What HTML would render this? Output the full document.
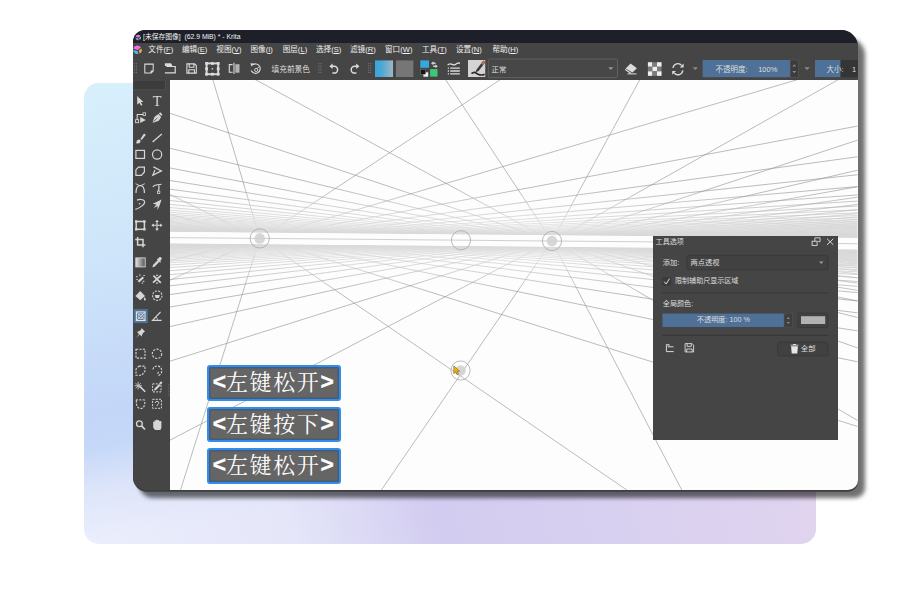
<!DOCTYPE html><html lang="zh"><head><meta charset="utf-8"><title>Krita</title><style>
html,body{margin:0;padding:0;background:#fff;}
body{width:900px;height:600px;position:relative;overflow:hidden;font-family:"Liberation Sans","Noto Sans CJK SC",sans-serif;}
.abs{position:absolute}
#card{position:absolute;left:84px;top:83px;width:732px;height:460.5px;border-radius:15px;
 background:linear-gradient(75deg,#ebeefc 0%,#e5e7f9 24%,#d2ccf0 42%,#d8d0f0 62%,#e0d4ef 86%);overflow:hidden}
#card .ov{position:absolute;left:0;top:0;width:100%;height:100%;
 background:linear-gradient(170deg,#d8effc 0%,#cfe6fa 28%,#c3d6f8 56%,#c5d8f8 62%,rgba(214,224,249,0.55) 70%,rgba(230,233,251,0) 78%)}
#win{position:absolute;left:133px;top:30px;width:724.5px;height:459.5px;border-radius:12px 17px 10px 14px;
 background:#454545;box-shadow:0 1.8px 0.6px #3e3e3e,6.5px 8px 4px rgba(0,0,0,.56);overflow:hidden}
#title{position:absolute;left:0;top:0;width:100%;height:12.5px;background:#1d2029;color:#f4f4f4;font-size:6.8px;line-height:14.4px;white-space:nowrap}
#menu{position:absolute;left:0;top:12.5px;width:100%;height:14.5px;background:#454545;color:#f0f0f0;font-size:7.6px;line-height:14px;white-space:nowrap}
#menu span{position:absolute;top:0}
#menu u{text-decoration-thickness:0.6px;text-underline-offset:1px}
#tb{position:absolute;left:0;top:27px;width:100%;height:22.5px;background:#454545}
#canvas{position:absolute;left:37px;top:49.5px;width:687.5px;height:410px;background:#fdfdfd;overflow:hidden}
#tools{position:absolute;left:0;top:49.5px;width:37px;height:410px;background:#454545}
.key{position:absolute;left:37.2px;width:134px;height:35.5px;box-sizing:border-box;border:2.5px solid #2f8ff0;border-radius:3px;background:#656565;
 box-shadow:inset 0 0 0 1.5px #4a5a70;color:#fff;text-align:center;font-family:"Liberation Serif","Noto Serif CJK SC",serif;font-size:22px;letter-spacing:1.6px;line-height:30px;padding-right:2px;white-space:nowrap}
.key b{font-family:"Liberation Sans",sans-serif;font-weight:bold;font-size:22.7px;letter-spacing:0;-webkit-text-stroke:0.45px #fff;position:relative;top:-1.2px}
.t{color:#dedede;line-height:10px;white-space:nowrap}
#panel{position:absolute;left:653.3px;top:236px;width:184.5px;height:203.5px;background:#454545;color:#e8e8e8;font-size:7.6px;white-space:nowrap}
</style></head><body>
<div id="card"><div class="ov"></div></div>
<div id="win">
<div id="title"><span class="abs" style="left:10px">[未保存图像]&nbsp; (62.9 MiB) * - Krita</span></div>
<div id="menu"><span style="left:15.3px">文件(<u>F</u>)</span><span style="left:49.0px">编辑(<u>E</u>)</span><span style="left:83.3px">视图(<u>V</u>)</span><span style="left:117.5px">图像(<u>I</u>)</span><span style="left:149.7px">图层(<u>L</u>)</span><span style="left:183.0px">选择(<u>S</u>)</span><span style="left:217.0px">滤镜(<u>R</u>)</span><span style="left:252.0px">窗口(<u>W</u>)</span><span style="left:289.0px">工具(<u>T</u>)</span><span style="left:323.0px">设置(<u>N</u>)</span><span style="left:359.5px">帮助(<u>H</u>)</span></div>
<svg class="abs" style="left:0;top:0" width="12" height="27" viewBox="133 30 12 27"><g transform="translate(138.2 37.5) scale(0.66)"><path d="M-4.2 -1.2A4.4 4.4 0 0 1 3.6 -2.4L0.4 0.2Z" fill="#f06fe0"/><path d="M-4.3 0.2L0.2 1.2L1 4.2A4.4 4.4 0 0 1 -4.3 0.2Z" fill="#4fb2f2"/><path d="M1.4 0.6L4.2 -1.4A4.4 4.4 0 0 1 2.2 3.8Z" fill="#e3b23c"/></g><g transform="translate(137.4 49.8)"><path d="M-4.2 -1.2A4.4 4.4 0 0 1 3.6 -2.4L0.4 0.2Z" fill="#f06fe0"/><path d="M-4.3 0.2L0.2 1.2L1 4.2A4.4 4.4 0 0 1 -4.3 0.2Z" fill="#4fb2f2"/><path d="M1.4 0.6L4.2 -1.4A4.4 4.4 0 0 1 2.2 3.8Z" fill="#e3b23c"/></g></svg>
<div id="tb"><svg class="abs" style="left:0;top:0" width="724.5" height="22.5" viewBox="133 57 724.5 22.5"><rect x="133.9" y="63.2" width="1" height="1" fill="#7a7a7a"/><rect x="135.9" y="63.2" width="1" height="1" fill="#7a7a7a"/><rect x="133.9" y="65.4" width="1" height="1" fill="#7a7a7a"/><rect x="135.9" y="65.4" width="1" height="1" fill="#7a7a7a"/><rect x="133.9" y="67.6" width="1" height="1" fill="#7a7a7a"/><rect x="135.9" y="67.6" width="1" height="1" fill="#7a7a7a"/><rect x="133.9" y="69.8" width="1" height="1" fill="#7a7a7a"/><rect x="135.9" y="69.8" width="1" height="1" fill="#7a7a7a"/><rect x="133.9" y="72.0" width="1" height="1" fill="#7a7a7a"/><rect x="135.9" y="72.0" width="1" height="1" fill="#7a7a7a"/><path d="M144.8 64.1H153.2V71L151.2 73H144.8Z M153.2 71H151.2V73" fill="none" stroke="#dcdcdc" stroke-width="1.05"/><path d="M164.9 63.2h6l1.2 1.7v1.2h-7.2z" fill="#dcdcdc"/><path d="M166.4 66.5H175.2V72.9H164.9" fill="none" stroke="#dcdcdc" stroke-width="1.2"/><path d="M186.9 63.9H194.6L196.3 65.6V73.1H186.9Z M189.2 63.9V67.2H193.9V63.9 M188.8 73.1V69.7H194.4V73.1" fill="none" stroke="#dcdcdc" stroke-width="1.1"/><rect x="206.6" y="63.4" width="11.6" height="10.8" fill="none" stroke="#dcdcdc" stroke-width="1.9"/><rect x="205.2" y="62.0" width="2.8" height="2.8" fill="#dcdcdc"/><rect x="205.2" y="67.4" width="2.8" height="2.8" fill="#dcdcdc"/><rect x="205.2" y="72.8" width="2.8" height="2.8" fill="#dcdcdc"/><rect x="211.0" y="62.0" width="2.8" height="2.8" fill="#dcdcdc"/><rect x="211.7" y="68.1" width="1.4" height="1.4" fill="#dcdcdc"/><rect x="211.0" y="72.8" width="2.8" height="2.8" fill="#dcdcdc"/><rect x="216.8" y="62.0" width="2.8" height="2.8" fill="#dcdcdc"/><rect x="216.8" y="67.4" width="2.8" height="2.8" fill="#dcdcdc"/><rect x="216.8" y="72.8" width="2.8" height="2.8" fill="#dcdcdc"/><path d="M234 62.8V74" stroke="#dcdcdc" stroke-width="1.1"/><path d="M232.6 64.6H229.3V72.3H232.6" fill="none" stroke="#dcdcdc" stroke-width="1.1"/><rect x="235.3" y="64.2" width="4.2" height="8.5" fill="#b4b4b4"/><path d="M252.6 64.9A4.7 4.7 0 1 1 251.2 70.6" fill="none" stroke="#dcdcdc" stroke-width="1.1"/><path d="M250.3 63.2l3.6 0.3l-2.3 2.9z" fill="#dcdcdc"/><circle cx="256.2" cy="70" r="1.6" fill="none" stroke="#dcdcdc" stroke-width="0.9"/><path d="M257.2 68.8L259 66.6" stroke="#dcdcdc" stroke-width="0.9"/><rect x="318.4" y="63.2" width="1" height="1" fill="#7a7a7a"/><rect x="320.4" y="63.2" width="1" height="1" fill="#7a7a7a"/><rect x="318.4" y="65.4" width="1" height="1" fill="#7a7a7a"/><rect x="320.4" y="65.4" width="1" height="1" fill="#7a7a7a"/><rect x="318.4" y="67.6" width="1" height="1" fill="#7a7a7a"/><rect x="320.4" y="67.6" width="1" height="1" fill="#7a7a7a"/><rect x="318.4" y="69.8" width="1" height="1" fill="#7a7a7a"/><rect x="320.4" y="69.8" width="1" height="1" fill="#7a7a7a"/><rect x="318.4" y="72.0" width="1" height="1" fill="#7a7a7a"/><rect x="320.4" y="72.0" width="1" height="1" fill="#7a7a7a"/><path d="M331.2 66.3H334.2A3.4 3.4 0 0 1 334.2 73.1H332.4" fill="none" stroke="#dcdcdc" stroke-width="1.5"/><path d="M329.4 66.3L332.6 63.6V69z" fill="#dcdcdc"/><path d="M357.6 66.3H354.6A3.4 3.4 0 0 0 354.6 73.1H356.4" fill="none" stroke="#dcdcdc" stroke-width="1.5"/><path d="M359.4 66.3L356.2 63.6V69z" fill="#dcdcdc"/><rect x="368.2" y="63.2" width="1" height="1" fill="#7a7a7a"/><rect x="370.2" y="63.2" width="1" height="1" fill="#7a7a7a"/><rect x="368.2" y="65.4" width="1" height="1" fill="#7a7a7a"/><rect x="370.2" y="65.4" width="1" height="1" fill="#7a7a7a"/><rect x="368.2" y="67.6" width="1" height="1" fill="#7a7a7a"/><rect x="370.2" y="67.6" width="1" height="1" fill="#7a7a7a"/><rect x="368.2" y="69.8" width="1" height="1" fill="#7a7a7a"/><rect x="370.2" y="69.8" width="1" height="1" fill="#7a7a7a"/><rect x="368.2" y="72.0" width="1" height="1" fill="#7a7a7a"/><rect x="370.2" y="72.0" width="1" height="1" fill="#7a7a7a"/><defs><linearGradient id="bg1" x1="0" x2="1" y1="0" y2="0"><stop offset="0" stop-color="#35a6dc"/><stop offset="0.35" stop-color="#4aa8d6"/><stop offset="1" stop-color="#9fb7c2"/></linearGradient></defs><rect x="375" y="60.4" width="18" height="16.6" fill="url(#bg1)"/><rect x="396" y="60.4" width="17.4" height="16.6" fill="#767676"/><rect x="423.4" y="72.3" width="4.8" height="4.4" fill="#f2f2f2"/><rect x="420.6" y="69.6" width="5" height="4.6" fill="#16181c" stroke="#888" stroke-width="0.4"/><rect x="420.3" y="60.4" width="8.7" height="7.4" fill="#36a9dc"/><rect x="430.1" y="69.1" width="7.4" height="7.5" fill="#3cc878"/><path d="M431 63.2l2.4-2v1.3h2.2v1.4h-2.2v1.3z M437.8 66.2l-2.4 2v-1.3h-2.2v-1.4h2.2v-1.3z" fill="#cfcfcf"/><path d="M447.6 65.2C450.5 61.6 453 66.4 455.4 64.4S458.6 62.6 460 63.4" fill="none" stroke="#dcdcdc" stroke-width="1.3"/><path d="M450.2 68.2H459.8M450.2 71H459.8M450.2 73.9H459.8" stroke="#dcdcdc" stroke-width="1.3"/><path d="M447.8 68.2h1.2M447.8 71h1.2M447.8 73.9h1.2" stroke="#dcdcdc" stroke-width="1.3"/><rect x="468" y="60" width="17.2" height="17" fill="#d4d4d4"/><path d="M483.4 60.4L476.6 69.4L475.4 72.6L478.6 71L485.4 62.2Z" fill="#3a3a3a"/><path d="M483.4 60.4L481 63.6L483 65.2L485.4 62.2Z" fill="#b07050"/><path d="M471.5 73.6C474 71.2 475.5 72.4 476.6 73.4S481.5 76 484.6 74.2" fill="none" stroke="#2a2a2a" stroke-width="1.7"/><rect x="488.3" y="59" width="129.2" height="18.6" rx="1.5" fill="#474747" stroke="#686868" stroke-width="0.8"/><path d="M608.3 67.2h5l-2.5 2.8z" fill="#9a9a9a"/><path d="M630.6 63.6L636.9 68.2L632.4 72.4L625.6 68.4Z" fill="#dcdcdc"/><path d="M625.2 69.6L631.2 73.4" stroke="#dcdcdc" stroke-width="1.2"/><path d="M627.5 73.9H636.5" stroke="#dcdcdc" stroke-width="1"/><rect x="647.90" y="62.20" width="4.55" height="4.55" fill="#efefef"/><rect x="647.90" y="66.75" width="4.55" height="4.55" fill="#7c7c7c"/><rect x="647.90" y="71.30" width="4.55" height="4.55" fill="#efefef"/><rect x="652.45" y="62.20" width="4.55" height="4.55" fill="#7c7c7c"/><rect x="652.45" y="66.75" width="4.55" height="4.55" fill="#efefef"/><rect x="652.45" y="71.30" width="4.55" height="4.55" fill="#7c7c7c"/><rect x="657.00" y="62.20" width="4.55" height="4.55" fill="#efefef"/><rect x="657.00" y="66.75" width="4.55" height="4.55" fill="#7c7c7c"/><rect x="657.00" y="71.30" width="4.55" height="4.55" fill="#efefef"/><path d="M673 68A4.9 4.9 0 0 1 681.6 65.4" fill="none" stroke="#dcdcdc" stroke-width="1.3"/><path d="M683.6 63.6V67.4H679.8z" fill="#dcdcdc"/><path d="M682.8 70.4A4.9 4.9 0 0 1 674.2 73" fill="none" stroke="#dcdcdc" stroke-width="1.3"/><path d="M672.2 74.8V71H676z" fill="#dcdcdc"/><path d="M692.6 67.2h5.4l-2.7 2.9z" fill="#8c8c8c"/><rect x="702.6" y="60" width="87.6" height="17.2" fill="#4f7197"/><rect x="790.2" y="60" width="8.2" height="17.2" fill="#3c3c3c" stroke="#5a5a5a" stroke-width="0.6"/><path d="M792.4 66.4l1.9-2.2l1.9 2.2z M792.4 71l1.9 2.2l1.9-2.2z" fill="#8a8a8a"/><path d="M804.4 67.2h5.4l-2.7 2.9z" fill="#8c8c8c"/><rect x="815" y="60" width="43" height="17.2" fill="#353535"/><rect x="815" y="60" width="25.4" height="17.2" fill="#4f7197"/></svg><span class="abs t" style="left:138.5px;top:7.6px;font-size:7.7px">填充前景色</span><span class="abs t" style="left:358.5px;top:7.6px;font-size:7.4px">正常</span><span class="abs t" style="left:582.5px;top:7.6px;font-size:7.5px">不透明度:</span><span class="abs t" style="left:625.2px;top:7.6px;font-size:7.5px">100%</span><span class="abs t" style="left:693.6px;top:7.6px;font-size:7.5px">大小:</span><span class="abs t" style="left:719px;top:7.6px;font-size:7.5px">1</span></div>
<div id="tools"><svg class="abs" style="left:0;top:0" width="37" height="410" viewBox="133 79.5 37 410"><rect x="133" y="79.5" width="32.6" height="9.8" fill="#3c3c3c" stroke="#565656" stroke-width="0.7"/><path d="M137.2 95.6V104.2L139.4 102.2L141 105.2L142.4 104.5L140.9 101.6L143.4 101.4Z" fill="#d6d6d6"/><text x="157" y="105" font-family="'Liberation Serif',serif" font-size="14.2" fill="#d6d6d6" text-anchor="middle">T</text><path d="M137.2 119.4V114H143.4" fill="none" stroke="#d6d6d6" stroke-width="1.1" /><rect x="135.6" y="119.2" width="3" height="3" fill="none" stroke="#d6d6d6" stroke-width="0.9"/><rect x="143" y="112.3" width="2.6" height="2.6" fill="none" stroke="#d6d6d6" stroke-width="0.8"/><path d="M140.2 116.6L145.8 119.6L140.2 122.4Z" fill="#d6d6d6"/><path d="M152.6 121.8L154.6 116.2L158.4 113.6L161.2 116.4L158.8 120.2L153 122.2Z" fill="#d6d6d6"/><path d="M153.4 121.2L157.4 117.4" stroke="#454545" stroke-width="0.8"/><path d="M158.8 113L160.2 111.8L162.4 114L161.4 115.6Z" fill="#d6d6d6"/><path d="M136.2 142.4C136.4 139.6 138.4 138.6 139.8 139.2C141.4 140.2 140.6 142.4 138.2 143C137.4 143.2 136.6 143 136.2 142.4Z" fill="#d6d6d6"/><path d="M140.4 138.4L143.6 133.6C144.4 132.6 146 133.6 145.4 134.8L141.8 139.6Z" fill="#d6d6d6"/><path d="M152.6 141.6L161.8 133.6" fill="none" stroke="#d6d6d6" stroke-width="1.3" /><rect x="135.9" y="149.9" width="8.6" height="8" fill="none" stroke="#d6d6d6" stroke-width="1.2"/><circle cx="157.1" cy="154" r="4.6" fill="none" stroke="#d6d6d6" stroke-width="1.2"/><path d="M138.4 166.6H144.4V171.4L141.4 174.8H135.9V169.4Z" fill="none" stroke="#d6d6d6" stroke-width="1.2" /><path d="M153.4 166.4L161.4 170.4L152.8 174.8L155 169.4" fill="none" stroke="#d6d6d6" stroke-width="1.2" /><path d="M136 192.6C136 187 138.4 185 140.2 185S144.4 187 144.4 192.6" fill="none" stroke="#d6d6d6" stroke-width="1.2" /><path d="M135.6 183.2L140.2 185.4L144.8 183.2" fill="none" stroke="#d6d6d6" stroke-width="0.9" /><path d="M152.8 186.4C155 183.6 159 184.2 161.4 183.8M158.6 184.4C159.6 187 158.6 188.4 158.6 190.6" fill="none" stroke="#d6d6d6" stroke-width="1.2" /><rect x="157.4" y="190.6" width="2.4" height="2.4" fill="none" stroke="#d6d6d6" stroke-width="0.8"/><path d="M135.4 208.8C140 207.6 145.6 203.6 144.4 200.6C143.4 198.4 139 198.8 137 199.6" fill="none" stroke="#d6d6d6" stroke-width="1.2" /><circle cx="139.6" cy="203.2" r="0.8" fill="#d6d6d6"/><path d="M161.6 199L152.8 203.2L156.4 204L153.6 207.4L157.6 205.4L157.4 209.4L159.4 205.6Z" fill="#d6d6d6"/><rect x="136.2" y="221" width="8.2" height="7.8" fill="none" stroke="#d6d6d6" stroke-width="1.5"/><rect x="135.0" y="219.8" width="2.4" height="2.4" fill="#d6d6d6"/><rect x="135.0" y="227.6" width="2.4" height="2.4" fill="#d6d6d6"/><rect x="143.2" y="219.8" width="2.4" height="2.4" fill="#d6d6d6"/><rect x="143.2" y="227.6" width="2.4" height="2.4" fill="#d6d6d6"/><path d="M157 220.4V229.2M152.4 224.8H161.6" fill="none" stroke="#d6d6d6" stroke-width="1.1" /><path d="M157 219.2L158.8 221.6H155.2ZM157 230.4L158.8 228H155.2ZM151.4 224.8L153.8 223V226.6ZM162.6 224.8L160.2 223V226.6Z" fill="#d6d6d6"/><path d="M137.6 236.6V244.4H145.4M135.2 239H143V246.8" fill="none" stroke="#d6d6d6" stroke-width="1.5" /><defs><linearGradient id="tg" x1="0" x2="1" y1="0" y2="0"><stop offset="0" stop-color="#e0e0e0"/><stop offset="1" stop-color="#555"/></linearGradient></defs><rect x="135.8" y="257.4" width="9.4" height="9" fill="url(#tg)" stroke="#d6d6d6" stroke-width="0.9"/><path d="M152.4 266.8L153 264.4L157.8 259.6L159.4 261.2L154.6 266.2Z" fill="#d6d6d6"/><path d="M157.6 258.6L159.4 256.8C160.4 255.8 162.6 257.6 161.6 258.8L160.2 260.6L161 261.4L160.2 262.2L156.8 258.8L157.6 258Z" fill="#d6d6d6"/><path d="M137.6 280.4L142.6 276L144 277.4L139.2 282Z" fill="#d6d6d6"/><path d="M136 276.2h1.6M139 274.6h1.6M142.6 280.8h1.8M136.4 279h1.4M141.6 282.6h1.6M143.4 275h1.4" fill="none" stroke="#d6d6d6" stroke-width="1" /><path d="M153 282.2L161 274.8M153.4 275.2L160.8 282.4" fill="none" stroke="#d6d6d6" stroke-width="1.7" /><circle cx="157" cy="274.8" r="0.9" fill="#d6d6d6"/><circle cx="157" cy="282.6" r="0.9" fill="#d6d6d6"/><path d="M135.4 295.4L140.2 290.6L145 295.4L140.2 299.8Z" fill="#d6d6d6"/><path d="M144.6 296.4C145.8 298 146.2 299 145.4 299.8C144.6 300.4 143.6 299.6 144 298.2Z" fill="#d6d6d6"/><circle cx="157.3" cy="295.2" r="4.7" fill="none" stroke="#d6d6d6" stroke-width="1.1" stroke-dasharray="2 1.2"/><path d="M154.8 294.4h5l-0.8 3.2h-3.4z" fill="#d6d6d6"/><rect x="133.6" y="308.6" width="14.2" height="14" fill="#4f7398"/><rect x="136.4" y="311.4" width="8.6" height="8.6" fill="none" stroke="#e4e4e4" stroke-width="1.1"/><path d="M136.4 311.4L145 320M145 311.4L136.4 320" stroke="#e4e4e4" stroke-width="0.9"/><circle cx="140.7" cy="315.7" r="2.6" fill="none" stroke="#e4e4e4" stroke-width="0.8"/><path d="M160.6 311.4L152.6 319.8H161.6" fill="none" stroke="#d6d6d6" stroke-width="1.2" /><path d="M157.4 319.6A3.6 3.6 0 0 0 156 316.4" fill="none" stroke="#d6d6d6" stroke-width="0.8" /><path d="M141.6 327.6L145.2 331.2L144 331.6L142.4 333.6L141.6 336L139.6 334L136.2 337.2L139 333.4L137 331.4L139.4 330.6L141.2 329Z" fill="#d6d6d6"/><rect x="136" y="348.8" width="9" height="8.8" fill="none" stroke="#d6d6d6" stroke-width="1.1" stroke-dasharray="2.2 1.2"/><circle cx="157" cy="353.3" r="4.7" fill="none" stroke="#d6d6d6" stroke-width="1.1" stroke-dasharray="2.2 1.3"/><path d="M139 365.6H145V370.6L141.8 374.8H136V368.6Z" fill="none" stroke="#d6d6d6" stroke-width="1.1" stroke-dasharray="2.2 1.2"/><path d="M153 369C153.4 365 159 364.4 161 367.4C162.6 370.4 161.4 373.6 159.4 374.6C157.6 375 157.4 372 158.8 371.4" fill="none" stroke="#d6d6d6" stroke-width="1.1" stroke-dasharray="2.2 1.2"/><path d="M139.6 385.6L145.2 391.2" fill="none" stroke="#d6d6d6" stroke-width="1.5" /><path d="M138.2 381.4V389M134.6 385.2H141.8M135.6 382.6L140.8 387.8M140.8 382.6L135.6 387.8" fill="none" stroke="#d6d6d6" stroke-width="0.8" /><rect x="152.6" y="383.4" width="8.4" height="8" fill="none" stroke="#d6d6d6" stroke-width="1" stroke-dasharray="2 1.2"/><path d="M154 390L154.6 388L159 383.6L160.4 385L156 389.4Z" fill="#d6d6d6"/><path d="M159.4 382.4L160.6 381.2C161.6 380.6 162.8 381.8 162 382.8L161 384Z" fill="#d6d6d6"/><path d="M136.4 399.8C136 405 137.6 408 140.6 408S145.2 405 144.8 399.8" fill="none" stroke="#d6d6d6" stroke-width="1.1" stroke-dasharray="2.2 1.2"/><path d="M135.8 399.4H145.4" fill="none" stroke="#d6d6d6" stroke-width="1" stroke-dasharray="2.2 1.2"/><rect x="152.6" y="398.8" width="8.8" height="9" fill="none" stroke="#d6d6d6" stroke-width="1" stroke-dasharray="2 1.2"/><path d="M155.2 402.4C155.4 400.4 158.6 400.4 158.8 402.2C158.8 403.8 157 403.8 157 405.6" fill="none" stroke="#d6d6d6" stroke-width="1" /><circle cx="139.4" cy="423.2" r="2.9" fill="none" stroke="#d6d6d6" stroke-width="1.3"/><path d="M141.6 425.4L145 429" fill="none" stroke="#d6d6d6" stroke-width="1.7" /><path d="M153.2 424.2V421.6C153.2 420.9 154.5 420.9 154.5 421.6V420.3C154.5 419.5 156 419.5 156 420.3V419.7C156 418.9 157.6 418.9 157.6 419.7V420.1C157.6 419.4 159.2 419.4 159.2 420.1V421C159.2 420.4 161.4 420.3 161.4 421.2V427.2L160.4 429.6H155L153.2 427Z" fill="#d6d6d6"/><rect x="168.4" y="383.6" width="0.9" height="0.9" fill="#777"/><rect x="168.4" y="385.8" width="0.9" height="0.9" fill="#777"/><rect x="168.4" y="388.0" width="0.9" height="0.9" fill="#777"/><rect x="168.4" y="390.2" width="0.9" height="0.9" fill="#777"/><rect x="168.4" y="392.4" width="0.9" height="0.9" fill="#777"/><rect x="168.4" y="394.6" width="0.9" height="0.9" fill="#777"/></svg></div>
<div id="canvas">
<svg class="abs" style="left:0;top:0" width="687.5" height="410" viewBox="0 0 687.5 410">
<defs><linearGradient id="fade" gradientUnits="userSpaceOnUse" x1="292.20" y1="24.86" x2="289.80" y2="295.52">
<stop offset="0.0000" stop-color="#ffffff" stop-opacity="1.00"/><stop offset="0.3079" stop-color="#ffffff" stop-opacity="1.00"/><stop offset="0.4002" stop-color="#ffffff" stop-opacity="0.55"/><stop offset="0.4520" stop-color="#ffffff" stop-opacity="0.33"/><stop offset="0.4771" stop-color="#ffffff" stop-opacity="0.33"/><stop offset="0.4800" stop-color="#ffffff" stop-opacity="0.00"/><stop offset="0.5000" stop-color="#ffffff" stop-opacity="0.00"/><stop offset="0.5200" stop-color="#ffffff" stop-opacity="0.00"/><stop offset="0.5229" stop-color="#ffffff" stop-opacity="0.33"/><stop offset="0.5480" stop-color="#ffffff" stop-opacity="0.33"/><stop offset="0.5998" stop-color="#ffffff" stop-opacity="0.55"/><stop offset="0.6921" stop-color="#ffffff" stop-opacity="1.00"/><stop offset="1.0000" stop-color="#ffffff" stop-opacity="1.00"/></linearGradient><mask id="fm" maskUnits="userSpaceOnUse" x="0" y="0" width="687.5" height="410"><rect x="0" y="0" width="687.5" height="410" fill="url(#fade)"/></mask></defs>
<g mask="url(#fm)"><path d="M89.8 158.4L-2.0 158.2M89.8 158.4L-2.0 158.2M89.8 158.4L-2.0 158.2M89.8 158.4L-2.0 158.2M89.8 158.4L-2.0 158.2M89.8 158.4L-2.0 158.2M89.8 158.4L-2.0 158.2M89.8 158.4L-2.0 158.2M89.8 158.4L-2.0 158.2M89.8 158.4L-2.0 158.2M89.8 158.4L-2.0 158.2M89.8 158.4L-2.0 158.2M89.8 158.4L-2.0 158.2M89.8 158.4L-2.0 158.3M89.8 158.4L-2.0 158.3M89.8 158.4L-2.0 158.3M89.8 158.4L-2.0 158.3M89.8 158.4L-2.0 158.3M89.8 158.4L-2.0 158.3M89.8 158.4L-2.0 158.3M89.8 158.4L-2.0 158.3M89.8 158.4L-2.0 158.3M89.8 158.4L-2.0 158.3M89.8 158.4L-2.0 158.4M89.8 158.4L-2.0 158.4M89.8 158.4L-2.0 158.4M89.8 158.4L-2.0 158.4M89.8 158.4L-2.0 158.4M89.8 158.4L-2.0 158.4M89.8 158.4L-2.0 158.4M89.8 158.4L-2.0 158.4M89.8 158.4L-2.0 158.5M89.8 158.4L-2.0 158.5M89.8 158.4L-2.0 158.5M89.8 158.4L-2.0 158.5M89.8 158.4L-2.0 158.5M89.8 158.4L-2.0 158.5M89.8 158.4L-2.0 158.6M89.8 158.4L-2.0 158.6M89.8 158.4L-2.0 158.6M89.8 158.4L-2.0 158.6M89.8 158.4L-2.0 158.6M89.8 158.4L-2.0 158.7M89.8 158.4L-2.0 158.7M89.8 158.4L-2.0 158.7M89.8 158.4L-2.0 158.7M89.8 158.4L-2.0 158.8M89.8 158.4L-2.0 158.8M89.8 158.4L-2.0 158.8M89.8 158.4L-2.0 158.9M89.8 158.4L-2.0 158.9M89.8 158.4L-2.0 158.9M89.8 158.4L-2.0 159.0M89.8 158.4L-2.0 159.0M89.8 158.4L-2.0 159.0M89.8 158.4L-2.0 159.1M89.8 158.4L-2.0 159.1M89.8 158.4L-2.0 159.2M89.8 158.4L-2.0 159.2M89.8 158.4L-2.0 159.3M89.8 158.4L-2.0 159.3M89.8 158.4L-2.0 159.4M89.8 158.4L-2.0 159.5M89.8 158.4L-2.0 159.5M89.8 158.4L-2.0 159.6M89.8 158.4L-2.0 159.7M89.8 158.4L-2.0 159.8M89.8 158.4L-2.0 159.9M89.8 158.4L-2.0 160.0M89.8 158.4L-2.0 160.1M89.8 158.4L-2.0 160.3M89.8 158.4L-2.0 160.4M89.8 158.4L-2.0 160.6M89.8 158.4L-2.0 160.7M89.8 158.4L-2.0 161.0M89.8 158.4L-2.0 161.2M89.8 158.4L-2.0 161.5M89.8 158.4L-2.0 161.8M89.8 158.4L-2.0 162.2M89.8 158.4L-2.0 162.6M89.8 158.4L-2.0 163.2M89.8 158.4L-2.0 163.8M89.8 158.4L-2.0 164.7M89.8 158.4L-2.0 165.9M89.8 158.4L-2.0 167.5M89.8 158.4L-2.0 169.8M89.8 158.4L-2.0 173.7M89.8 158.4L-2.0 181.1M89.8 158.4L-2.0 201.2M89.8 158.4L9.9 412.0M89.8 158.4L459.7 412.0M89.8 158.4L689.5 347.1M89.8 158.4L689.5 282.2M89.8 158.4L689.5 251.2M89.8 158.4L689.5 233.1M89.8 158.4L689.5 221.2M89.8 158.4L689.5 212.8M89.8 158.4L689.5 206.5M89.8 158.4L689.5 201.7M89.8 158.4L689.5 197.8M89.8 158.4L689.5 194.7M89.8 158.4L689.5 192.0M89.8 158.4L689.5 189.8M89.8 158.4L689.5 187.9M89.8 158.4L689.5 186.3M89.8 158.4L689.5 184.9M89.8 158.4L689.5 183.6M89.8 158.4L689.5 182.5M89.8 158.4L689.5 181.5M89.8 158.4L689.5 180.6M89.8 158.4L689.5 179.8M89.8 158.4L689.5 179.1M89.8 158.4L689.5 178.4M89.8 158.4L689.5 177.8M89.8 158.4L689.5 177.2M89.8 158.4L689.5 176.7M89.8 158.4L689.5 176.2M89.8 158.4L689.5 175.8M89.8 158.4L689.5 175.3M89.8 158.4L689.5 175.0M89.8 158.4L689.5 174.6M89.8 158.4L689.5 174.3M89.8 158.4L689.5 173.9M89.8 158.4L689.5 173.6M89.8 158.4L689.5 173.3M89.8 158.4L689.5 173.1M89.8 158.4L689.5 172.8M89.8 158.4L689.5 172.6M89.8 158.4L689.5 172.4M89.8 158.4L689.5 172.1M89.8 158.4L689.5 171.9M89.8 158.4L689.5 171.7M89.8 158.4L689.5 171.6M89.8 158.4L689.5 171.4M89.8 158.4L689.5 171.2M89.8 158.4L689.5 171.0M89.8 158.4L689.5 170.9M89.8 158.4L689.5 170.7M89.8 158.4L689.5 170.6M89.8 158.4L689.5 170.5M89.8 158.4L689.5 170.3M89.8 158.4L689.5 170.2M89.8 158.4L689.5 170.1M89.8 158.4L689.5 170.0M89.8 158.4L689.5 169.8M89.8 158.4L689.5 169.7M89.8 158.4L689.5 169.6M89.8 158.4L689.5 169.5M89.8 158.4L689.5 169.4M89.8 158.4L689.5 169.3M89.8 158.4L689.5 169.2M89.8 158.4L689.5 169.1M89.8 158.4L689.5 169.1M89.8 158.4L689.5 169.0M89.8 158.4L689.5 168.9M89.8 158.4L689.5 168.8M89.8 158.4L689.5 168.7M89.8 158.4L689.5 168.7M89.8 158.4L689.5 168.6M89.8 158.4L689.5 168.5M89.8 158.4L689.5 168.5M89.8 158.4L689.5 168.4M89.8 158.4L689.5 168.3M89.8 158.4L689.5 168.3M89.8 158.4L689.5 168.2M89.8 158.4L689.5 168.1M89.8 158.4L689.5 168.1M89.8 158.4L689.5 168.0M89.8 158.4L689.5 168.0M89.8 158.4L689.5 167.9M89.8 158.4L689.5 167.9M89.8 158.4L689.5 167.8M89.8 158.4L689.5 167.8M89.8 158.4L689.5 167.7M89.8 158.4L689.5 167.7M89.8 158.4L689.5 167.6M89.8 158.4L689.5 167.6M89.8 158.4L689.5 167.5M89.8 158.4L689.5 167.5M89.8 158.4L689.5 167.5M89.8 158.4L689.5 167.4M382.0 161.0L-2.0 161.1M382.0 161.0L-2.0 161.1M382.0 161.0L-2.0 161.2M382.0 161.0L-2.0 161.2M382.0 161.0L-2.0 161.3M382.0 161.0L-2.0 161.3M382.0 161.0L-2.0 161.4M382.0 161.0L-2.0 161.4M382.0 161.0L-2.0 161.4M382.0 161.0L-2.0 161.5M382.0 161.0L-2.0 161.5M382.0 161.0L-2.0 161.6M382.0 161.0L-2.0 161.6M382.0 161.0L-2.0 161.7M382.0 161.0L-2.0 161.7M382.0 161.0L-2.0 161.8M382.0 161.0L-2.0 161.9M382.0 161.0L-2.0 161.9M382.0 161.0L-2.0 162.0M382.0 161.0L-2.0 162.0M382.0 161.0L-2.0 162.1M382.0 161.0L-2.0 162.2M382.0 161.0L-2.0 162.2M382.0 161.0L-2.0 162.3M382.0 161.0L-2.0 162.4M382.0 161.0L-2.0 162.4M382.0 161.0L-2.0 162.5M382.0 161.0L-2.0 162.6M382.0 161.0L-2.0 162.7M382.0 161.0L-2.0 162.8M382.0 161.0L-2.0 162.8M382.0 161.0L-2.0 162.9M382.0 161.0L-2.0 163.0M382.0 161.0L-2.0 163.1M382.0 161.0L-2.0 163.2M382.0 161.0L-2.0 163.3M382.0 161.0L-2.0 163.4M382.0 161.0L-2.0 163.5M382.0 161.0L-2.0 163.6M382.0 161.0L-2.0 163.8M382.0 161.0L-2.0 163.9M382.0 161.0L-2.0 164.0M382.0 161.0L-2.0 164.1M382.0 161.0L-2.0 164.3M382.0 161.0L-2.0 164.4M382.0 161.0L-2.0 164.6M382.0 161.0L-2.0 164.7M382.0 161.0L-2.0 164.9M382.0 161.0L-2.0 165.1M382.0 161.0L-2.0 165.3M382.0 161.0L-2.0 165.4M382.0 161.0L-2.0 165.6M382.0 161.0L-2.0 165.8M382.0 161.0L-2.0 166.1M382.0 161.0L-2.0 166.3M382.0 161.0L-2.0 166.5M382.0 161.0L-2.0 166.8M382.0 161.0L-2.0 167.1M382.0 161.0L-2.0 167.4M382.0 161.0L-2.0 167.7M382.0 161.0L-2.0 168.0M382.0 161.0L-2.0 168.4M382.0 161.0L-2.0 168.7M382.0 161.0L-2.0 169.1M382.0 161.0L-2.0 169.6M382.0 161.0L-2.0 170.0M382.0 161.0L-2.0 170.6M382.0 161.0L-2.0 171.1M382.0 161.0L-2.0 171.7M382.0 161.0L-2.0 172.4M382.0 161.0L-2.0 173.1M382.0 161.0L-2.0 173.9M382.0 161.0L-2.0 174.7M382.0 161.0L-2.0 175.7M382.0 161.0L-2.0 176.8M382.0 161.0L-2.0 178.1M382.0 161.0L-2.0 179.5M382.0 161.0L-2.0 181.1M382.0 161.0L-2.0 182.9M382.0 161.0L-2.0 185.1M382.0 161.0L-2.0 187.7M382.0 161.0L-2.0 190.9M382.0 161.0L-2.0 194.8M382.0 161.0L-2.0 199.7M382.0 161.0L-2.0 206.1M382.0 161.0L-2.0 214.8M382.0 161.0L-2.0 227.4M382.0 161.0L-2.0 247.0M382.0 161.0L-2.0 281.8M382.0 161.0L-2.0 361.2M382.0 161.0L210.0 412.0M382.0 161.0L512.8 412.0M382.0 161.0L689.5 341.6M382.0 161.0L689.5 268.6M382.0 161.0L689.5 238.0M382.0 161.0L689.5 221.3M382.0 161.0L689.5 210.7M382.0 161.0L689.5 203.4M382.0 161.0L689.5 198.1M382.0 161.0L689.5 194.0M382.0 161.0L689.5 190.8M382.0 161.0L689.5 188.2M382.0 161.0L689.5 186.1M382.0 161.0L689.5 184.3M382.0 161.0L689.5 182.7M382.0 161.0L689.5 181.4M382.0 161.0L689.5 180.3M382.0 161.0L689.5 179.3M382.0 161.0L689.5 178.4M382.0 161.0L689.5 177.6M382.0 161.0L689.5 176.9M382.0 161.0L689.5 176.2M382.0 161.0L689.5 175.6M382.0 161.0L689.5 175.1M382.0 161.0L689.5 174.6M382.0 161.0L689.5 174.2M382.0 161.0L689.5 173.8M382.0 161.0L689.5 173.4M382.0 161.0L689.5 173.0M382.0 161.0L689.5 172.7M382.0 161.0L689.5 172.4M382.0 161.0L689.5 172.1M382.0 161.0L689.5 171.9M382.0 161.0L689.5 171.6M382.0 161.0L689.5 171.4M382.0 161.0L689.5 171.1M382.0 161.0L689.5 170.9M382.0 161.0L689.5 170.7M382.0 161.0L689.5 170.6M382.0 161.0L689.5 170.4M382.0 161.0L689.5 170.2M382.0 161.0L689.5 170.0M382.0 161.0L689.5 169.9M382.0 161.0L689.5 169.7M382.0 161.0L689.5 169.6M382.0 161.0L689.5 169.5M382.0 161.0L689.5 169.4M382.0 161.0L689.5 169.2M382.0 161.0L689.5 169.1M382.0 161.0L689.5 169.0M382.0 161.0L689.5 168.9M382.0 161.0L689.5 168.8M382.0 161.0L689.5 168.7M382.0 161.0L689.5 168.6M382.0 161.0L689.5 168.5M382.0 161.0L689.5 168.4M382.0 161.0L689.5 168.3M382.0 161.0L689.5 168.3M382.0 161.0L689.5 168.2M382.0 161.0L689.5 168.1M382.0 161.0L689.5 168.0M382.0 161.0L689.5 168.0M382.0 161.0L689.5 167.9M382.0 161.0L689.5 167.8M382.0 161.0L689.5 167.8M382.0 161.0L689.5 167.7M382.0 161.0L689.5 167.6M382.0 161.0L689.5 167.6M382.0 161.0L689.5 167.5M382.0 161.0L689.5 167.5M382.0 161.0L689.5 167.4M382.0 161.0L689.5 167.4M382.0 161.0L689.5 167.3M382.0 161.0L689.5 167.3M382.0 161.0L689.5 167.2M382.0 161.0L689.5 167.2M382.0 161.0L689.5 167.1M382.0 161.0L689.5 167.1M382.0 161.0L689.5 167.0M382.0 161.0L689.5 167.0M382.0 161.0L689.5 166.9M382.0 161.0L689.5 166.9M382.0 161.0L689.5 166.9M382.0 161.0L689.5 166.8M382.0 161.0L689.5 166.8M382.0 161.0L689.5 166.8M382.0 161.0L689.5 166.7M382.0 161.0L689.5 166.7M382.0 161.0L689.5 166.7M382.0 161.0L689.5 166.6M382.0 161.0L689.5 166.6M89.8 158.4L-2.0 157.0M89.8 158.4L-2.0 157.0M89.8 158.4L-2.0 157.0M89.8 158.4L-2.0 157.0M89.8 158.4L-2.0 157.0M89.8 158.4L-2.0 157.0M89.8 158.4L-2.0 157.0M89.8 158.4L-2.0 157.0M89.8 158.4L-2.0 157.0M89.8 158.4L-2.0 156.9M89.8 158.4L-2.0 156.9M89.8 158.4L-2.0 156.9M89.8 158.4L-2.0 156.9M89.8 158.4L-2.0 156.9M89.8 158.4L-2.0 156.9M89.8 158.4L-2.0 156.9M89.8 158.4L-2.0 156.9M89.8 158.4L-2.0 156.9M89.8 158.4L-2.0 156.9M89.8 158.4L-2.0 156.9M89.8 158.4L-2.0 156.8M89.8 158.4L-2.0 156.8M89.8 158.4L-2.0 156.8M89.8 158.4L-2.0 156.8M89.8 158.4L-2.0 156.8M89.8 158.4L-2.0 156.8M89.8 158.4L-2.0 156.8M89.8 158.4L-2.0 156.8M89.8 158.4L-2.0 156.7M89.8 158.4L-2.0 156.7M89.8 158.4L-2.0 156.7M89.8 158.4L-2.0 156.7M89.8 158.4L-2.0 156.7M89.8 158.4L-2.0 156.7M89.8 158.4L-2.0 156.7M89.8 158.4L-2.0 156.6M89.8 158.4L-2.0 156.6M89.8 158.4L-2.0 156.6M89.8 158.4L-2.0 156.6M89.8 158.4L-2.0 156.6M89.8 158.4L-2.0 156.5M89.8 158.4L-2.0 156.5M89.8 158.4L-2.0 156.5M89.8 158.4L-2.0 156.5M89.8 158.4L-2.0 156.5M89.8 158.4L-2.0 156.4M89.8 158.4L-2.0 156.4M89.8 158.4L-2.0 156.4M89.8 158.4L-2.0 156.3M89.8 158.4L-2.0 156.3M89.8 158.4L-2.0 156.3M89.8 158.4L-2.0 156.2M89.8 158.4L-2.0 156.2M89.8 158.4L-2.0 156.2M89.8 158.4L-2.0 156.1M89.8 158.4L-2.0 156.1M89.8 158.4L-2.0 156.0M89.8 158.4L-2.0 156.0M89.8 158.4L-2.0 155.9M89.8 158.4L-2.0 155.9M89.8 158.4L-2.0 155.8M89.8 158.4L-2.0 155.8M89.8 158.4L-2.0 155.7M89.8 158.4L-2.0 155.6M89.8 158.4L-2.0 155.5M89.8 158.4L-2.0 155.5M89.8 158.4L-2.0 155.4M89.8 158.4L-2.0 155.3M89.8 158.4L-2.0 155.2M89.8 158.4L-2.0 155.0M89.8 158.4L-2.0 154.9M89.8 158.4L-2.0 154.8M89.8 158.4L-2.0 154.6M89.8 158.4L-2.0 154.4M89.8 158.4L-2.0 154.2M89.8 158.4L-2.0 154.0M89.8 158.4L-2.0 153.7M89.8 158.4L-2.0 153.4M89.8 158.4L-2.0 153.0M89.8 158.4L-2.0 152.5M89.8 158.4L-2.0 152.0M89.8 158.4L-2.0 151.3M89.8 158.4L-2.0 150.4M89.8 158.4L-2.0 149.3M89.8 158.4L-2.0 147.7M89.8 158.4L-2.0 145.3M89.8 158.4L-2.0 141.4M89.8 158.4L-2.0 133.9M89.8 158.4L-2.0 113.6M89.8 158.4L42.4 -2.0M89.8 158.4L332.9 -2.0M89.8 158.4L633.0 -2.0M89.8 158.4L689.5 45.7M89.8 158.4L689.5 76.5M89.8 158.4L689.5 94.5M89.8 158.4L689.5 106.4M89.8 158.4L689.5 114.8M89.8 158.4L689.5 121.0M89.8 158.4L689.5 125.9M89.8 158.4L689.5 129.7M89.8 158.4L689.5 132.8M89.8 158.4L689.5 135.5M89.8 158.4L689.5 137.7M89.8 158.4L689.5 139.5M89.8 158.4L689.5 141.2M89.8 158.4L689.5 142.6M89.8 158.4L689.5 143.9M89.8 158.4L689.5 145.0M89.8 158.4L689.5 146.0M89.8 158.4L689.5 146.9M89.8 158.4L689.5 147.7M89.8 158.4L689.5 148.4M89.8 158.4L689.5 149.1M89.8 158.4L689.5 149.7M89.8 158.4L689.5 150.3M89.8 158.4L689.5 150.8M89.8 158.4L689.5 151.3M89.8 158.4L689.5 151.7M89.8 158.4L689.5 152.1M89.8 158.4L689.5 152.5M89.8 158.4L689.5 152.9M89.8 158.4L689.5 153.2M89.8 158.4L689.5 153.5M89.8 158.4L689.5 153.8M89.8 158.4L689.5 154.1M89.8 158.4L689.5 154.4M89.8 158.4L689.5 154.6M89.8 158.4L689.5 154.9M89.8 158.4L689.5 155.1M89.8 158.4L689.5 155.3M89.8 158.4L689.5 155.5M89.8 158.4L689.5 155.7M89.8 158.4L689.5 155.9M89.8 158.4L689.5 156.1M89.8 158.4L689.5 156.3M89.8 158.4L689.5 156.4M89.8 158.4L689.5 156.6M89.8 158.4L689.5 156.7M89.8 158.4L689.5 156.9M89.8 158.4L689.5 157.0M89.8 158.4L689.5 157.2M89.8 158.4L689.5 157.3M89.8 158.4L689.5 157.4M89.8 158.4L689.5 157.5M89.8 158.4L689.5 157.6M89.8 158.4L689.5 157.7M89.8 158.4L689.5 157.8M89.8 158.4L689.5 157.9M89.8 158.4L689.5 158.0M89.8 158.4L689.5 158.1M89.8 158.4L689.5 158.2M89.8 158.4L689.5 158.3M89.8 158.4L689.5 158.4M89.8 158.4L689.5 158.5M89.8 158.4L689.5 158.6M89.8 158.4L689.5 158.7M89.8 158.4L689.5 158.7M89.8 158.4L689.5 158.8M89.8 158.4L689.5 158.9M89.8 158.4L689.5 158.9M89.8 158.4L689.5 159.0M89.8 158.4L689.5 159.1M89.8 158.4L689.5 159.1M89.8 158.4L689.5 159.2M89.8 158.4L689.5 159.3M89.8 158.4L689.5 159.3M89.8 158.4L689.5 159.4M89.8 158.4L689.5 159.4M89.8 158.4L689.5 159.5M89.8 158.4L689.5 159.5M89.8 158.4L689.5 159.6M89.8 158.4L689.5 159.6M89.8 158.4L689.5 159.7M89.8 158.4L689.5 159.7M89.8 158.4L689.5 159.8M89.8 158.4L689.5 159.8M89.8 158.4L689.5 159.9M89.8 158.4L689.5 159.9M89.8 158.4L689.5 160.0M89.8 158.4L689.5 160.0M89.8 158.4L689.5 160.1M382.0 161.0L-2.0 154.1M382.0 161.0L-2.0 154.0M382.0 161.0L-2.0 154.0M382.0 161.0L-2.0 153.9M382.0 161.0L-2.0 153.9M382.0 161.0L-2.0 153.9M382.0 161.0L-2.0 153.8M382.0 161.0L-2.0 153.8M382.0 161.0L-2.0 153.7M382.0 161.0L-2.0 153.7M382.0 161.0L-2.0 153.6M382.0 161.0L-2.0 153.6M382.0 161.0L-2.0 153.5M382.0 161.0L-2.0 153.5M382.0 161.0L-2.0 153.4M382.0 161.0L-2.0 153.4M382.0 161.0L-2.0 153.3M382.0 161.0L-2.0 153.3M382.0 161.0L-2.0 153.2M382.0 161.0L-2.0 153.1M382.0 161.0L-2.0 153.1M382.0 161.0L-2.0 153.0M382.0 161.0L-2.0 152.9M382.0 161.0L-2.0 152.9M382.0 161.0L-2.0 152.8M382.0 161.0L-2.0 152.7M382.0 161.0L-2.0 152.6M382.0 161.0L-2.0 152.6M382.0 161.0L-2.0 152.5M382.0 161.0L-2.0 152.4M382.0 161.0L-2.0 152.3M382.0 161.0L-2.0 152.2M382.0 161.0L-2.0 152.1M382.0 161.0L-2.0 152.0M382.0 161.0L-2.0 151.9M382.0 161.0L-2.0 151.8M382.0 161.0L-2.0 151.7M382.0 161.0L-2.0 151.6M382.0 161.0L-2.0 151.5M382.0 161.0L-2.0 151.4M382.0 161.0L-2.0 151.3M382.0 161.0L-2.0 151.2M382.0 161.0L-2.0 151.0M382.0 161.0L-2.0 150.9M382.0 161.0L-2.0 150.7M382.0 161.0L-2.0 150.6M382.0 161.0L-2.0 150.4M382.0 161.0L-2.0 150.3M382.0 161.0L-2.0 150.1M382.0 161.0L-2.0 149.9M382.0 161.0L-2.0 149.7M382.0 161.0L-2.0 149.5M382.0 161.0L-2.0 149.3M382.0 161.0L-2.0 149.1M382.0 161.0L-2.0 148.9M382.0 161.0L-2.0 148.6M382.0 161.0L-2.0 148.4M382.0 161.0L-2.0 148.1M382.0 161.0L-2.0 147.8M382.0 161.0L-2.0 147.5M382.0 161.0L-2.0 147.2M382.0 161.0L-2.0 146.8M382.0 161.0L-2.0 146.4M382.0 161.0L-2.0 146.0M382.0 161.0L-2.0 145.6M382.0 161.0L-2.0 145.1M382.0 161.0L-2.0 144.6M382.0 161.0L-2.0 144.1M382.0 161.0L-2.0 143.5M382.0 161.0L-2.0 142.8M382.0 161.0L-2.0 142.1M382.0 161.0L-2.0 141.3M382.0 161.0L-2.0 140.4M382.0 161.0L-2.0 139.4M382.0 161.0L-2.0 138.3M382.0 161.0L-2.0 137.1M382.0 161.0L-2.0 135.7M382.0 161.0L-2.0 134.1M382.0 161.0L-2.0 132.2M382.0 161.0L-2.0 130.0M382.0 161.0L-2.0 127.4M382.0 161.0L-2.0 124.2M382.0 161.0L-2.0 120.3M382.0 161.0L-2.0 115.4M382.0 161.0L-2.0 108.9M382.0 161.0L-2.0 100.2M382.0 161.0L-2.0 87.6M382.0 161.0L-2.0 67.8M382.0 161.0L-2.0 32.6M382.0 161.0L82.4 -2.0M382.0 161.0L274.5 -2.0M382.0 161.0L470.7 -2.0M382.0 161.0L671.2 -2.0M382.0 161.0L689.5 59.5M382.0 161.0L689.5 89.8M382.0 161.0L689.5 106.4M382.0 161.0L689.5 116.9M382.0 161.0L689.5 124.2M382.0 161.0L689.5 129.5M382.0 161.0L689.5 133.5M382.0 161.0L689.5 136.7M382.0 161.0L689.5 139.3M382.0 161.0L689.5 141.4M382.0 161.0L689.5 143.2M382.0 161.0L689.5 144.8M382.0 161.0L689.5 146.1M382.0 161.0L689.5 147.2M382.0 161.0L689.5 148.2M382.0 161.0L689.5 149.1M382.0 161.0L689.5 149.9M382.0 161.0L689.5 150.6M382.0 161.0L689.5 151.3M382.0 161.0L689.5 151.8M382.0 161.0L689.5 152.4M382.0 161.0L689.5 152.9M382.0 161.0L689.5 153.3M382.0 161.0L689.5 153.7M382.0 161.0L689.5 154.1M382.0 161.0L689.5 154.4M382.0 161.0L689.5 154.8M382.0 161.0L689.5 155.1M382.0 161.0L689.5 155.4M382.0 161.0L689.5 155.6M382.0 161.0L689.5 155.9M382.0 161.0L689.5 156.1M382.0 161.0L689.5 156.3M382.0 161.0L689.5 156.5M382.0 161.0L689.5 156.7M382.0 161.0L689.5 156.9M382.0 161.0L689.5 157.1M382.0 161.0L689.5 157.3M382.0 161.0L689.5 157.4M382.0 161.0L689.5 157.6M382.0 161.0L689.5 157.7M382.0 161.0L689.5 157.9M382.0 161.0L689.5 158.0M382.0 161.0L689.5 158.1M382.0 161.0L689.5 158.2M382.0 161.0L689.5 158.4M382.0 161.0L689.5 158.5M382.0 161.0L689.5 158.6M382.0 161.0L689.5 158.7M382.0 161.0L689.5 158.8M382.0 161.0L689.5 158.9M382.0 161.0L689.5 159.0M382.0 161.0L689.5 159.0M382.0 161.0L689.5 159.1M382.0 161.0L689.5 159.2M382.0 161.0L689.5 159.3M382.0 161.0L689.5 159.4M382.0 161.0L689.5 159.4M382.0 161.0L689.5 159.5M382.0 161.0L689.5 159.6M382.0 161.0L689.5 159.6M382.0 161.0L689.5 159.7M382.0 161.0L689.5 159.8M382.0 161.0L689.5 159.8M382.0 161.0L689.5 159.9M382.0 161.0L689.5 160.0M382.0 161.0L689.5 160.0M382.0 161.0L689.5 160.1M382.0 161.0L689.5 160.1M382.0 161.0L689.5 160.2M382.0 161.0L689.5 160.2M382.0 161.0L689.5 160.3M382.0 161.0L689.5 160.3M382.0 161.0L689.5 160.4M382.0 161.0L689.5 160.4M382.0 161.0L689.5 160.4M382.0 161.0L689.5 160.5M382.0 161.0L689.5 160.5M382.0 161.0L689.5 160.6M382.0 161.0L689.5 160.6M382.0 161.0L689.5 160.6M382.0 161.0L689.5 160.7M382.0 161.0L689.5 160.7M382.0 161.0L689.5 160.7M382.0 161.0L689.5 160.8M382.0 161.0L689.5 160.8M382.0 161.0L689.5 160.9M382.0 161.0L689.5 160.9" fill="none" stroke="#929292" stroke-width="0.62"/></g>
<line x1="0.0" y1="157.60" x2="687.5" y2="163.72" stroke="#b0b0b0" stroke-width="0.6"/>
<circle cx="89.75" cy="158.40" r="9.6" fill="none" stroke="#a8a8a8" stroke-width="0.8"/><circle cx="89.75" cy="158.40" r="5.3" fill="#d0d0d0" fill-opacity="0.85"/>
<circle cx="382.00" cy="161.00" r="9.6" fill="none" stroke="#a8a8a8" stroke-width="0.8"/><circle cx="382.00" cy="161.00" r="5.3" fill="#d0d0d0" fill-opacity="0.85"/>
<circle cx="291.00" cy="160.20" r="9.6" fill="none" stroke="#a8a8a8" stroke-width="0.8"/>
<circle cx="290.50" cy="290.50" r="9.6" fill="none" stroke="#a8a8a8" stroke-width="0.8"/><circle cx="290.50" cy="290.50" r="5.3" fill="#d0d0d0" fill-opacity="0.85"/>
<path d="M283.8 285.9 l0 7.8 l2 -1.7 l1.4 2.8 l1.4 -0.7 l-1.4 -2.7 l2.6 -0.2 z" fill="#f5b400" stroke="#5a4a20" stroke-width="0.5"/>
</svg>
<div class="key" style="top:285.5px"><b>&lt;</b>左键松开<b>&gt;</b></div>
<div class="key" style="top:327.2px"><b>&lt;</b>左键按下<b>&gt;</b></div>
<div class="key" style="top:368.5px"><b>&lt;</b>左键松开<b>&gt;</b></div>
</div>
</div>
<div id="panel"><svg class="abs" style="left:0;top:0" width="184.2" height="203.5" viewBox="653.3 236 184.2 203.5"><path d="M815.2 241.2V237.8H820.4V241.6H818.4" fill="none" stroke="#dadada" stroke-width="0.9"/><rect x="812.4" y="241.2" width="5" height="4.2" fill="none" stroke="#dadada" stroke-width="0.9"/><path d="M827.4 238.8L833.6 244.8M833.6 238.8L827.4 244.8" stroke="#dadada" stroke-width="1"/><rect x="687.4" y="255.3" width="140.8" height="14.4" rx="1.5" fill="#414141" stroke="#383838" stroke-width="0.9"/><path d="M819.4 261.6h4.4l-2.2 2.4z" fill="#9a9a9a"/><rect x="662.4" y="277" width="9.2" height="8.8" rx="1" fill="#3a3a3a"/><path d="M664.4 281.6L666.4 284L669.8 278.6" fill="none" stroke="#dadada" stroke-width="1"/><path d="M662.4 292.9H828.4M662.4 335.3H828.4" stroke="#343434" stroke-width="0.8"/><rect x="662.8" y="313.6" width="121.6" height="13.4" fill="#4f7197"/><rect x="784.4" y="313.6" width="8.2" height="13.4" fill="#3e3e3e" stroke="#555" stroke-width="0.5"/><path d="M786.8 319l1.8-2l1.8 2z M786.8 322l1.8 2l1.8-2z" fill="#8a8a8a"/><rect x="798.4" y="313" width="29.8" height="14.6" rx="1.5" fill="#414141" stroke="#383838" stroke-width="0.9"/><rect x="801.3" y="316.2" width="24.2" height="7.8" fill="#b2b2b2"/><path d="M666.2 344.3h3.4l0.8 1.2h-4.2z" fill="#dadada"/><path d="M666.7 345.6V351.6H674 M668 346.8H673.8" fill="none" stroke="#dadada" stroke-width="1"/><path d="M685.4 343.6H692.4L693.9 345.1V352H685.4Z M687.4 343.6V346.4H691.6V343.6 M687 352V349H692.4V352" fill="none" stroke="#dadada" stroke-width="0.9"/><rect x="778" y="342" width="50.2" height="13.8" rx="1.5" fill="#414141" stroke="#383838" stroke-width="0.9"/><path d="M791.4 346.2H798.2L797.6 353.6H792Z M790.8 344.8H798.8V345.6H790.8Z M793.4 344H796.2V344.8H793.4Z" fill="#e6e6e6"/></svg><span class="abs t" style="left:2.3px;top:0.8px;font-size:7.10px">工具选项</span><span class="abs t" style="left:9.5px;top:21.7px;font-size:7.20px">添加:</span><span class="abs t" style="left:37.3px;top:21.7px;font-size:7.20px">两点透视</span><span class="abs t" style="left:21.7px;top:40.4px;font-size:7.05px">限制辅助尺显示区域</span><span class="abs t" style="left:9.5px;top:62.6px;font-size:7.10px">全局颜色:</span><span class="abs t" style="left:43.5px;top:79.3px;font-size:7.20px">不透明度: 100 %</span><span class="abs t" style="left:147.5px;top:107.9px;font-size:7.40px">全部</span></div>
</body></html>
